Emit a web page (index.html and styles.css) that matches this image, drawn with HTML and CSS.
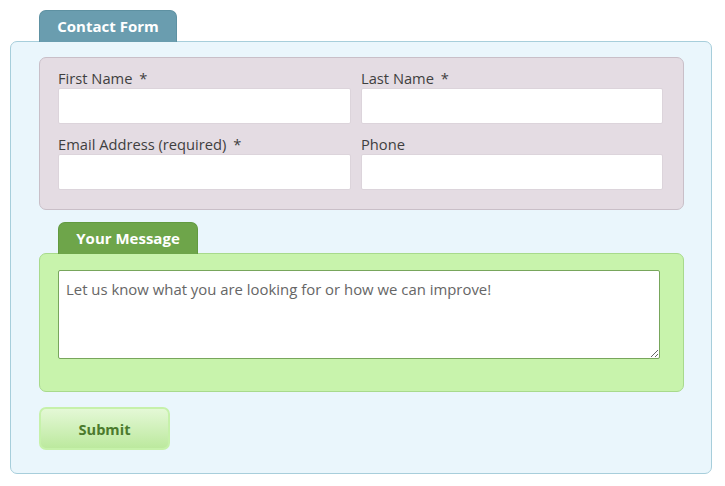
FILE: index.html
```html
<!DOCTYPE html>
<html>
<head>
<meta charset="utf-8">
<link rel="stylesheet" href="styles.css">
</head>
<body>
<div class="form-wrap">
  <div class="tab tab-blue">Contact Form</div>
  <div class="panel">
    <div class="fields">
      <div class="field">
        <label class="label">First Name <span class="req">*</span></label>
        <input class="input" type="text">
      </div>
      <div class="field">
        <label class="label">Last Name <span class="req">*</span></label>
        <input class="input" type="text">
      </div>
      <div class="field">
        <label class="label">Email Address (required) <span class="req">*</span></label>
        <input class="input" type="text">
      </div>
      <div class="field">
        <label class="label">Phone</label>
        <input class="input" type="text">
      </div>
    </div>
    <div class="tab tab-green">Your Message</div>
    <div class="message-box">
      <textarea class="textarea">Let us know what you are looking for or how we can improve!</textarea>
    </div>
    <button class="submit" type="button">Submit</button>
  </div>
</div>
</body>
</html>
```
FILE: styles.css
```css
* { box-sizing: border-box; }
body {
  margin: 0;
  background: #ffffff;
  font-family: "Open Sans", "Noto Sans", sans-serif;
  color: #444;
}
.form-wrap {
  margin: 10px 0 0 10px;
  width: 702px;
}
.tab {
  height: 32px;
  border-radius: 7px 7px 0 0;
  color: #ffffff;
  font-weight: 700;
  font-size: 15px;
  line-height: 31px;
  text-align: center;
  position: relative;
  z-index: 1;
  margin-bottom: -1px;
}
.tab-blue {
  width: 138px;
  margin-left: 29px;
  background: #6a9daf;
  border: 1px solid #5e91a2;
  border-bottom: none;
}
.tab-green {
  width: 140px;
  margin-left: 19px;
  margin-top: 12px;
  background: #6ea54a;
  border: 1px solid #629a40;
  border-bottom: none;
}
.panel {
  background: #eaf6fc;
  border: 1px solid #a7cedb;
  border-radius: 7px;
  padding: 15px 27px 23px 28px;
}
.fields {
  background: #e4dce3;
  border: 1px solid #c9bfc8;
  border-radius: 7px;
  padding: 10px 20px 19px 18px;
  display: grid;
  grid-template-columns: 293px 1fr;
  column-gap: 10px;
  row-gap: 10px;
}
.field {
  display: flex;
  flex-direction: column;
}
.label {
  font-size: 14.7px;
  line-height: 20px;
  color: #3f3f3f;
}
.req { margin-left: 3px; }
.input {
  height: 36px;
  border: 1px solid #dcd4db;
  border-radius: 2px;
  background: #ffffff;
  margin: 0;
}
.message-box {
  background: #c8f3ac;
  border: 1px solid #a8da8c;
  border-radius: 7px;
  padding: 16px 22px 32px 18px;
}
.textarea {
  display: block;
  width: 602px;
  height: 89px;
  margin: 0;
  border: 1px solid #78a65c;
  border-radius: 2px;
  background: #ffffff;
  font-family: "Open Sans", "Noto Sans", sans-serif;
  font-size: 14.9px;
  line-height: 20px;
  color: #666;
  padding: 8px 7px;
  resize: vertical;
}
.submit {
  display: block;
  margin-top: 15px;
  width: 131px;
  height: 43px;
  border: 2px solid #c6f1aa;
  border-radius: 7px;
  background: linear-gradient(to bottom, #e4f8d6 0%, #bce99e 100%);
  font-family: "Open Sans", "Noto Sans", sans-serif;
  font-weight: 700;
  font-size: 14.6px;
  color: #4b7a2d;
  cursor: pointer;
  padding: 0;
}
```
